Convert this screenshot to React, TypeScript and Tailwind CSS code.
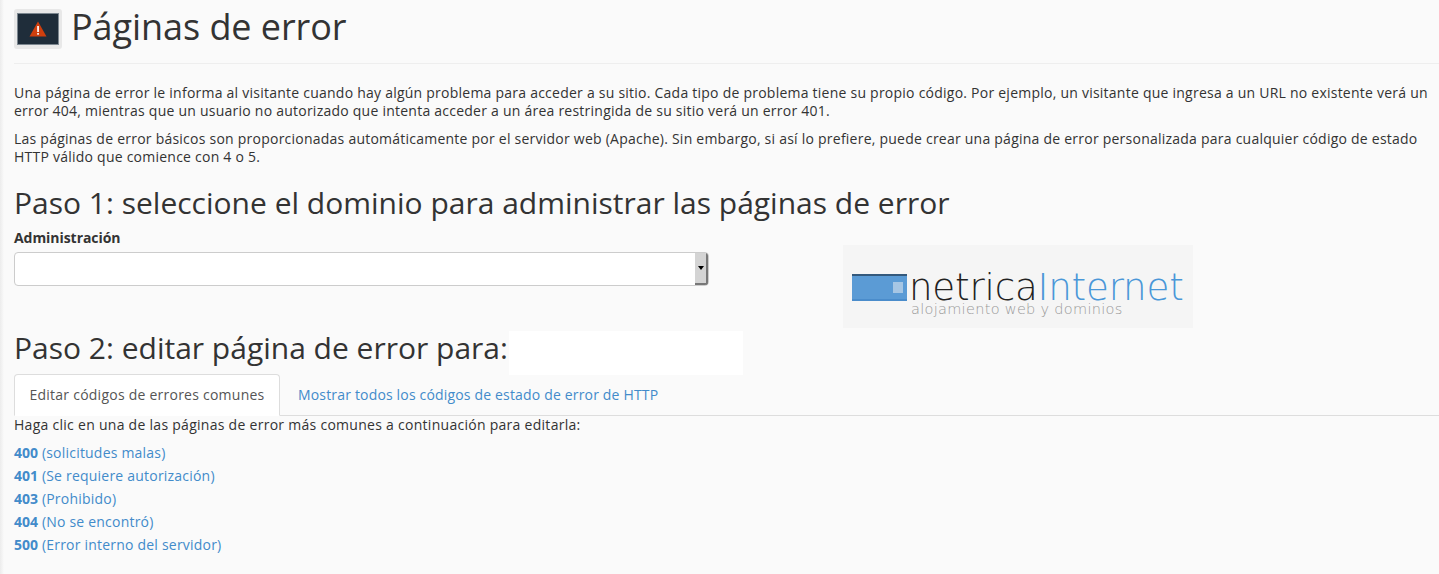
const links = [
  { code: "400", label: "(solicitudes malas)" },
  { code: "401", label: "(Se requiere autorización)" },
  { code: "403", label: "(Prohibido)" },
  { code: "404", label: "(No se encontró)" },
  { code: "500", label: "(Error interno del servidor)" },
];

function PageIcon() {
  return (
    <div className="w-[48px] h-[40px] bg-[#e8e8e8] rounded-[3px] flex items-center justify-center shrink-0">
      <div className="w-[42px] h-[32px] bg-[#1f2d3a] border border-[#7c8790] flex items-center justify-center">
        <svg width="18" height="16" viewBox="0 0 18 16">
          <path d="M9 0.5 L17.5 15.5 L0.5 15.5 Z" fill="#cf3f0e" />
          <rect x="8.2" y="5" width="1.7" height="6" fill="#fff" />
          <rect x="8.2" y="12" width="1.7" height="1.7" fill="#fff" />
        </svg>
      </div>
    </div>
  );
}

function Logo() {
  return (
    <div className="w-[350px] h-[83px] bg-[#f5f5f5] pl-[9px] pt-[26px]">
      <div className="flex items-start h-[32px]">
        <div className="relative w-[55px] h-[27px] mt-[3px] bg-[#5b9bd5] border-t-2 border-t-[#34597c] border-b-2 border-b-[#4a8ccb] shrink-0">
          <div className="absolute right-[4px] top-[6px] w-[10px] h-[11px] bg-[#a6c6e4]" />
        </div>
        <div className="ml-[2px] text-[37.2px] leading-[32px] font-['DejaVu_Sans',sans-serif] font-extralight whitespace-nowrap tracking-[-0.2px]">
          <span className="text-[#222222]">netrica</span>
          <span className="text-[#4a97d8]">Internet</span>
        </div>
      </div>
      <div className="ml-[59px] text-[14.5px] leading-[12px] text-[#999999] font-['DejaVu_Sans',sans-serif] font-extralight whitespace-nowrap tracking-[0.3px]">
        alojamiento web y dominios
      </div>
    </div>
  );
}

export default function App() {
  return (
    <div className="relative min-h-[574px] bg-[#fafafa] text-[#333333] text-[14px] font-['Open_Sans',sans-serif] pl-[14px] overflow-hidden">
      <div className="absolute left-0 top-0 bottom-0 w-[4px] bg-gradient-to-r from-[#ececec] to-[#fafafa]" />

      <div className="flex items-center gap-[9px] h-[64px] border-b border-[#eeeeee] pb-[9px] pt-[3px]">
        <PageIcon />
        <h1 className="mt-[-4px] text-[36px] leading-[44px] tracking-[-0.06px] text-[#333333]">Páginas de error</h1>
      </div>

      <p className="mt-[20px] text-[14px] leading-[18px] tracking-[0.238px]">
        Una página de error le informa al visitante cuando hay algún problema para acceder a su sitio. Cada tipo de problema tiene su propio código. Por ejemplo, un visitante que ingresa a un URL no existente verá un error 404, mientras que un usuario no autorizado que intenta acceder a un área restringida de su sitio verá un error 401.
      </p>
      <p className="mt-[10px] text-[14px] leading-[18px] tracking-[0.235px]">
        Las páginas de error básicos son proporcionadas automáticamente por el servidor web (Apache). Sin embargo, si así lo prefiere, puede crear una página de error personalizada para cualquier código de estado HTTP válido que comience con 4 o 5.
      </p>

      <h2 className="mt-[20px] text-[30px] leading-[33px] text-[#333333]">Paso 1: seleccione el dominio para administrar las páginas de error</h2>

      <div className="flex mt-[9px]">
        <div className="w-[695px]">
          <div className="font-bold leading-[20px] tracking-[-0.05px]">Administración</div>
          <div className="mt-[4px] h-[34px] bg-white border border-[#cccccc] rounded-[4px] flex justify-end overflow-hidden">
            <div className="w-[13px] h-full bg-[#d4d4d4] border-r-2 border-b-2 border-[#777777] flex items-center justify-center">
              <div className="w-0 h-0 border-l-[3px] border-r-[3px] border-t-[4px] border-l-transparent border-r-transparent border-t-black" />
            </div>
          </div>
        </div>
        <div className="ml-[134px] mt-[17px]">
          <Logo />
        </div>
      </div>

      <div className="flex items-start mt-[3px] h-[44px]">
        <h2 className="text-[30px] leading-[33px] text-[#333333]">Paso 2: editar página de error para:</h2>
        <div className="ml-[1px] w-[234px] h-[44px] bg-white" />
      </div>

      <div className="flex mt-[-1px] h-[42px] border-b border-[#dddddd]">
        <div className="w-[266px] h-[42px] pb-[2px] bg-white border border-[#dddddd] border-b-white rounded-t-[4px] flex items-center justify-center text-[#555555] tracking-[0.24px]">
          Editar códigos de errores comunes
        </div>
        <div className="ml-[18px] h-[41px] flex items-center text-[#428bca] tracking-[0.17px]">
          Mostrar todos los códigos de estado de error de HTTP
        </div>
      </div>

      <p className="mt-[-1px] leading-[20px] tracking-[0.277px]">Haga clic en una de las páginas de error más comunes a continuación para editarla:</p>

      <ul className="mt-[6px]">
        {links.map((l) => (
          <li key={l.code} className="h-[23px] leading-[23px] text-[#428bca] tracking-[0.21px]">
            <span className="font-bold tracking-normal">{l.code}</span> {l.label}
          </li>
        ))}
      </ul>
    </div>
  );
}
